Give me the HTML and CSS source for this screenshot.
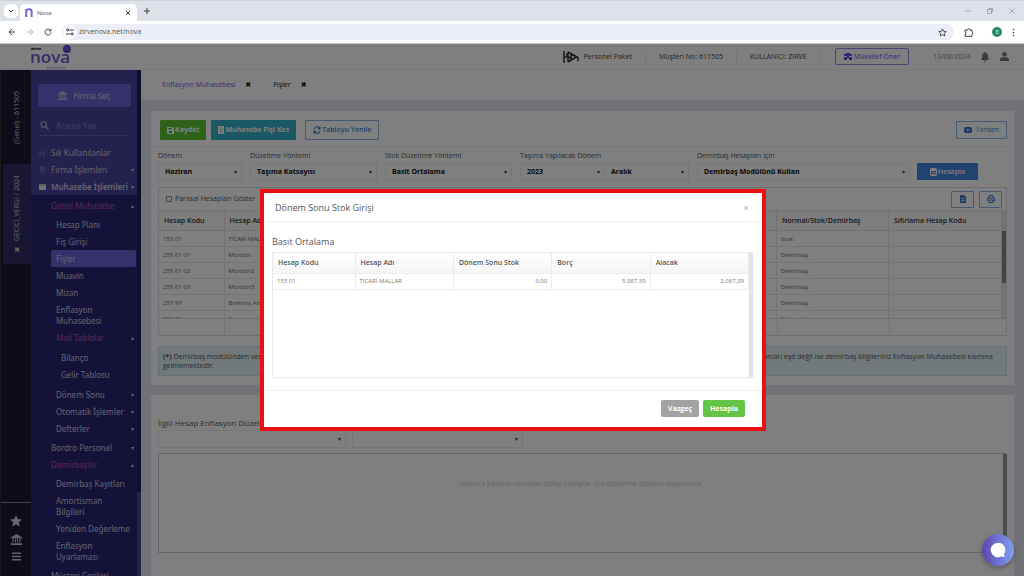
FILE: index.html
```html
<!DOCTYPE html>
<html lang="tr">
<head>
<meta charset="utf-8">
<title>Nova</title>
<link rel="stylesheet" href="styles.css">
</head>
<body>
<header class="browser">
  <div class="tabstrip">
    <button class="tab-search" aria-label="Sekmelerde ara"><svg width="8" height="8" viewBox="0 0 8 8"><path d="M2 3l2 2 2-2" class="ln"/></svg></button>
    <div class="tab">
      <svg width="8" height="9" viewBox="0 0 8 9"><path d="M1.2 9V1M1.2 2.4C3 .6 6.6.8 6.6 3.6V9" fill="none" stroke="#7067cf" stroke-width="2"/></svg>
      <span class="tab-title">Nova</span>
      <button class="plain" aria-label="Sekmeyi kapat"><svg width="6" height="6" viewBox="0 0 6 6"><path d="M1 1l4 4M5 1L1 5" class="ln"/></svg></button>
    </div>
    <button class="plain" aria-label="Yeni sekme"><svg width="8" height="8" viewBox="0 0 8 8"><path d="M4 1v6M1 4h6" class="ln"/></svg></button>
    <div class="window-buttons">
      <svg width="6" height="6" viewBox="0 0 6 6"><path d="M0 3h6"/></svg>
      <svg width="6" height="6" viewBox="0 0 6 6"><rect x=".5" y="1.5" width="4" height="4"/><path d="M2 1.5V.5h3.5V4H4.5"/></svg>
      <svg width="6" height="6" viewBox="0 0 6 6"><path d="M.5.5l5 5M5.5.5l-5 5"/></svg>
    </div>
  </div>
  <div class="addressbar">
    <button class="plain" aria-label="Geri"><svg width="8" height="8" viewBox="0 0 8 8"><path d="M7 4H1.4M4 1L1 4l3 3" class="ln"/></svg></button>
    <button class="plain faint" aria-label="İleri"><svg width="8" height="8" viewBox="0 0 8 8"><path d="M1 4h5.6M4 1l3 3-3 3" class="ln"/></svg></button>
    <button class="plain" aria-label="Yenile"><svg width="8" height="8" viewBox="0 0 8 8"><path d="M6.6 2.6A3 3 0 1 0 7 4.4M7 .8v2.1H4.8" class="ln"/></svg></button>
    <div class="url">
      <span class="site"><svg width="8" height="8" viewBox="0 0 8 8"><path d="M3.5 2H8M0 6h4.5" class="ln"/><circle cx="1.7" cy="2" r="1.1" class="ln"/><circle cx="6.2" cy="6" r="1.1" class="ln"/></svg></span>
      <input type="text" aria-label="Adres" value="zirvenova.net/nova">
      <svg width="9" height="9" viewBox="0 0 10 10"><path d="M5 1l1.2 2.7 3 .3-2.300 2 .7 2.900L5 7.400 2.400 8.900l.7-2.900L.8 4l3-.3z" class="ln"/></svg>
    </div>
    <svg width="10" height="10" viewBox="0 0 10 10"><path d="M1 3h2.500a1.200 1.200 0 0 1 2.400 0H8v2.200a1.200 1.200 0 0 1 0 2.300V9.300H1V7.200a1.100 1.100 0 0 0 0-2.200z" class="ln"/></svg>
    <span class="profile">B</span>
    <svg class="dots" width="3" height="9" viewBox="0 0 3 9"><circle cx="1.500" cy="1.500" r=".8"/><circle cx="1.500" cy="4.500" r=".8"/><circle cx="1.500" cy="7.500" r=".8"/></svg>
  </div>
</header>

<div class="app">
  <header class="topbar">
    <a class="logo" href="#" aria-label="zirve nova">
      <small class="logo-top">zirve</small>
      <b>nova</b>
      <span class="logo-badge">5.0</span>
      <small class="logo-sub">Enterprise</small>
    </a>
    <div class="top-item packet">
      <svg width="16" height="12" viewBox="0 0 16 12"><path d="M1 0v12M1 6h4M5 1v10M5 1l10 5.500M5 11l8-5M3 3l6 6M8 3v6M15 6v4" fill="none" stroke="#333" stroke-width="1.500"/></svg>
      Personel Paket
    </div>
    <div class="top-item number">Müşteri No: 611505</div>
    <div class="top-item user">KULLANICI: ZIRVE</div>
    <button class="invite"><svg width="8" height="7" viewBox="0 0 8 7"><path d="M0 3V1h2V0h4v1h2v2H0zM0 4h3v3H0zM5 4h3v3H5zM3 3h2v2H3z" fill="#5a4fe0"/></svg>Mükellef Öner</button>
    <div class="top-date">13/08/2024</div>
    <svg width="8" height="10" viewBox="0 0 8 10"><path d="M3.300 0h1.400v1C6.500 1.500 7 3 7 5c0 1.500.500 2 1 3H0c.5-1 1-1.500 1-3 0-2 .5-3.500 2.300-4zM2.800 8.600h2.400a1.200 1.200 0 0 1-2.400 0z" fill="#777"/></svg>
    <svg width="9" height="9" viewBox="0 0 9 9"><circle cx="4.500" cy="2.200" r="2.200" fill="#777"/><path d="M0 9V7.500C0 5.500 2 5.300 3 5.200h3c1 .1 3 .3 3 2.300V9z" fill="#777"/></svg>
  </header>

  <div class="workspace">
    <aside class="rail">
      <button class="rail-tab">(Genel) - 611505</button>
      <button class="rail-tab current">✖&nbsp; GECİCİ_VERGİ / 2024</button>
      <div class="rail-tools">
        <button class="plain" aria-label="Favoriler"><svg width="12" height="12" viewBox="0 0 12 12"><path d="M6 0l1.800 3.900 4.200.5-3.100 2.900.8 4.300L6 9.500l-3.700 2.100.8-4.300L0 4.400l4.200-.5z" fill="#c9c8cf"/></svg></button>
        <button class="plain" aria-label="Firmalar"><svg width="11" height="11" viewBox="0 0 11 11"><path d="M0 3.500L5.500 0 11 3.500v1H0zM1.500 5h1.200v3.500H1.500zM4 5h1v3.500H4zM6 5h1v3.500H6zM8.300 5h1.200v3.500H8.300zM0 9.300h11V11H0z" fill="#c9c8cf"/></svg></button>
        <button class="plain" aria-label="Menü"><svg width="9" height="9" viewBox="0 0 9 9"><path d="M0 1.200h9M0 4.500h9M0 7.800h9" stroke="#c9c8cf" stroke-width="1.400"/></svg></button>
      </div>
    </aside>

    <nav class="sidebar">
      <button class="pick"><svg width="9" height="9" viewBox="0 0 11 11"><path d="M0 3.500L5.500 0 11 3.500v1H0zM1.500 5h1.500v3.500H1.500zM4.700 5h1.600v3.500H4.700zM8 5h1.500v3.500H8zM0 9.300h11V11H0z" fill="#b9b5d5"/></svg>Firma Seç</button>
      <label class="search"><svg width="9" height="9" viewBox="0 0 9 9"><circle cx="3.600" cy="3.600" r="2.700" fill="none" stroke="#a5a0c8" stroke-width="1.400"/><path d="M5.600 5.600L8.500 8.500" stroke="#a5a0c8" stroke-width="1.500"/></svg><input type="search" placeholder="Arama Yap" aria-label="Arama Yap"></label>
      <ul class="menu">
        <li><a href="#"><i class="mi dim"><svg width="7" height="7" viewBox="0 0 7 7"><path d="M0 7V4l2-2 2 2V1l2 2v4H4V5H2v2z"/></svg></i>Sık Kullanılanlar</a></li>
        <li><a href="#" class="has"><i class="mi dim"><svg width="7" height="7" viewBox="0 0 7 7"><path d="M1 0h5v7H4V5H3v2H1z"/></svg></i>Firma İşlemleri</a></li>
        <li class="open"><a href="#" class="has bold"><i class="mi"><svg width="7" height="7" viewBox="0 0 7 7"><path d="M0 1h7v6H0z"/><path d="M0 2h7" stroke="#45415f" stroke-width=".5"/></svg></i>Muhasebe İşlemleri</a></li>
      </ul>
      <ul class="menu sub">
        <li><a href="#" class="has up hot">Genel Muhasebe</a>
          <ul>
            <li><a href="#">Hesap Planı</a></li>
            <li><a href="#">Fiş Girişi</a></li>
            <li><a href="#" class="active">Fişler</a></li>
            <li><a href="#">Muavin</a></li>
            <li><a href="#">Mizan</a></li>
            <li><a href="#">Enflasyon<br>Muhasebesi</a></li>
            <li><a href="#" class="has up hot">Mali Tablolar</a>
              <ul>
                <li><a href="#">Bilanço</a></li>
                <li><a href="#">Gelir Tablosu</a></li>
              </ul>
            </li>
            <li><a href="#" class="has">Dönem Sonu</a></li>
            <li><a href="#" class="has">Otomatik İşlemler</a></li>
            <li><a href="#" class="has">Defterler</a></li>
          </ul>
        </li>
        <li><a href="#" class="has">Bordro Personel</a></li>
        <li><a href="#" class="has up hot">Demirbaşlar</a>
          <ul>
            <li><a href="#">Demirbaş Kayıtları</a></li>
            <li><a href="#">Amortisman<br>Bilgileri</a></li>
            <li><a href="#">Yeniden Değerleme</a></li>
            <li><a href="#">Enflasyon<br>Uyarlaması</a></li>
          </ul>
        </li>
        <li><a href="#">Müşteri Çerileri</a></li>
      </ul>
    </nav>
    <div class="side-scroll"><span></span></div>

    <main class="main">
      <div class="pagetabs">
        <a href="#" class="on">Enflasyon Muhasebesi</a><button class="plain x" aria-label="Kapat">✖</button>
        <a href="#" class="second">Fişler</a><button class="plain x" aria-label="Kapat">✖</button>
      </div>
      <div class="cards">
        <section class="card">
          <div class="actions">
            <button class="btn green"><svg width="7" height="7" viewBox="0 0 7 7"><path d="M0 0h5.500L7 1.500V7H0z" fill="#fff"/><path d="M1.500 1h3v1.500h-3zM2 4h3v2H2z" fill="#4fa62e"/></svg>Kaydet</button>
            <button class="btn teal"><svg width="6" height="8" viewBox="0 0 6 8"><path d="M0 0h6v8H0z" fill="#fff"/><path d="M1.500 2h3M1.500 4h3M1.500 6h3" stroke="#2f9fb0" stroke-width=".6"/></svg>Muhasebe Fişi Kes</button>
            <button class="btn outline refresh"><svg width="8" height="8" viewBox="0 0 8 8"><path d="M1 3.500A3 3 0 0 1 6.500 2M7 4.500A3 3 0 0 1 1.500 6M7 .5v2.200H4.800M1 7.500V5.300h2.200" fill="none" stroke="#3f7ac8" stroke-width="1.200"/></svg>Tabloyu Yenile</button>
            <button class="btn outline help"><svg width="8" height="6" viewBox="0 0 8 6"><rect width="8" height="6" rx="1.500" fill="#3f7ac8"/><path d="M3.200 1.700v2.600L5.400 3z" fill="#fff"/></svg>Yarden</button>
          </div>
          <form class="filters">
            <div class="field f1"><label for="donem">Dönem</label><div class="pick-box"><select id="donem"><option>Haziran</option></select></div></div>
            <div class="field f2"><label for="yontem">Düzeltme Yöntemi</label><div class="pick-box"><select id="yontem"><option>Taşıma Katsayısı</option></select></div></div>
            <div class="field f3"><label for="stok">Stok Düzeltme Yöntemi</label><div class="pick-box"><select id="stok"><option>Basit Ortalama</option></select></div></div>
            <div class="field f4"><label for="yil">Taşıma Yapılacak Dönem</label><div class="pair"><div class="pick-box"><select id="yil"><option>2023</option></select></div><div class="pick-box"><select aria-label="Ay"><option>Aralık</option></select></div></div></div>
            <div class="field f5"><label for="demirbas">Demirbaş Hesapları İçin</label><div class="pick-box"><select id="demirbas"><option>Demirbaş Modülünü Kullan</option></select></div></div>
            <button type="button" class="btn blue"><svg width="7" height="8" viewBox="0 0 7 8"><rect x=".5" y=".5" width="6" height="7" rx=".6" fill="none" stroke="#fff"/><path d="M1 1h5v2H1zM1.500 4h1v1h-1zM3 4h1v1H3zM4.500 4h1v3h-1zM1.500 6h2.500v1H1.500z" fill="#fff"/></svg>Hesapla</button>
          </form>
          <div class="grid-box">
            <div class="grid-tools">
              <label><input type="checkbox">Parasal Hesapları Göster</label>
              <button class="btn outline icon first" aria-label="Dışa aktar"><svg width="6" height="8" viewBox="0 0 6 8"><path d="M0 0h4l2 2v6H0z" fill="#3f7ac8"/><path d="M1.500 3.500h3M1.500 5.500h3" stroke="#fff" stroke-width=".8"/></svg></button>
              <button class="btn outline icon" aria-label="Yazdır"><svg width="8" height="8" viewBox="0 0 8 8"><path d="M2 3V.5h4V3M.5 6V3h7v3H6M2 5h4v2.500H2z" fill="none" stroke="#3f7ac8"/></svg></button>
            </div>
            <div class="grid-main">
              <div class="grid-view">
                <table class="data">
                  <colgroup><col class="c1"><col><col class="c3"><col class="c4"></colgroup>
                  <thead><tr><th>Hesap Kodu</th><th>Hesap Adı</th><th>Normal/Stok/Demirbaş</th><th>Sıfırlama Hesap Kodu</th></tr></thead>
                  <tbody>
                    <tr><td>153 01</td><td>TİCARİ MALLAR</td><td>Stok</td><td></td></tr>
                    <tr><td>255 01 01</td><td>Monitör</td><td>Demirbaş</td><td></td></tr>
                    <tr><td>255 01 02</td><td>Monitör2</td><td>Demirbaş</td><td></td></tr>
                    <tr><td>255 01 03</td><td>Monitör3</td><td>Demirbaş</td><td></td></tr>
                    <tr><td>257 99</td><td>Birikmiş Amortismanlar</td><td>Demirbaş</td><td></td></tr>
                    <tr><td>500 01</td><td>Sermaye</td><td>Normal</td><td></td></tr>
                  </tbody>
                </table>
              </div>
              <div class="track"><span></span></div>
            </div>
            <div class="grid-foot"><span></span><span></span><span></span><span></span></div>
          </div>
          <p class="note"><b>(*)</b> Demirbaş modülünden verilerin gelebilmesi için demirbaş kartlarındaki toplam tutarlar ile muhasebe hesaplarının dönem sonu bakiyeleri eşit olmalıdır. Hesapların birikmiş amortismanları eşit değil ise demirbaş bilgileriniz Enflasyon Muhasebesi kısmına gelmemektedir.</p>
        </section>

        <section class="card lower">
          <h2>İlgili Hesap Enflasyon Düzeltme Tablosu</h2>
          <div class="lower-row">
            <div class="pick-box"><select aria-label="Hesap"><option></option></select></div>
            <div class="pick-box"><select aria-label="Tablo"><option></option></select></div>
          </div>
          <div class="empty"><p>Yalnızca parasal olmayan detay hesaplar için düzeltme tablosu oluşturulur.</p><i></i></div>
        </section>
      </div>
    </main>
  </div>

  <div class="overlay">
    <div class="dialog" role="dialog" aria-labelledby="dlg-title">
      <div class="dlg-head"><h1 id="dlg-title">Dönem Sonu Stok Girişi</h1><button class="plain" aria-label="Kapat"><svg width="6" height="6" viewBox="0 0 6 6"><path d="M1 1l4 4M5 1L1 5" stroke="#b5b5b5"/></svg></button></div>
      <div class="dlg-body">
        <h3>Basit Ortalama</h3>
        <div class="dlg-grid">
          <table class="stock">
            <colgroup><col class="s1"><col><col><col><col></colgroup>
            <thead><tr><th>Hesap Kodu</th><th>Hesap Adı</th><th>Dönem Sonu Stok</th><th>Borç</th><th>Alacak</th></tr></thead>
            <tbody><tr><td>153 01</td><td>TİCARİ MALLAR</td><td class="num">0,00</td><td class="num">5.087,39</td><td class="num">2.087,39</td></tr></tbody>
          </table>
          <span class="dlg-track"></span>
        </div>
      </div>
      <div class="dlg-foot"><button class="btn grey">Vazgeç</button><button class="btn lime">Hesapla</button></div>
    </div>
  </div>

  <button class="chat" aria-label="Sohbet"><svg width="16" height="16" viewBox="0 0 16 16"><path d="M8 .8a7.200 7.200 0 1 0 3.600 13.400c1 .8 2.400 1 3.400.8-.6-.7-.9-1.600-.9-3A7.200 7.200 0 0 0 8 .8z" fill="#fff"/></svg></button>
</div>
</body>
</html>
```
FILE: styles.css
```css
* { box-sizing: border-box; }

body {
  margin: 0;
  height: 100vh;
  display: flex;
  flex-direction: column;
  overflow: hidden;
  font: 7px/10px "Open Sans", "Noto Sans", sans-serif;
  color: #555;
  background: #fff;
}

button, input, select { font: inherit; color: inherit; }
button { cursor: pointer; }
a { color: inherit; text-decoration: none; }
ul { list-style: none; margin: 0; padding: 0; }
h1, h2, h3, p { margin: 0; font-weight: 400; }
svg { display: block; flex: none; }

.ln { fill: none; stroke: #3c4043; stroke-width: 1; }
.plain { border: 0; background: none; padding: 0; display: flex; align-items: center; }
.faint { opacity: .4; }

/* Browser frame */
.browser { flex: none; background: #dde2e8; border-top: 1px solid #cdd2d8; }
.tabstrip { height: 20px; display: flex; align-items: center; gap: 2px; padding: 0 9px 0 4px; }
.tab-search { width: 14px; height: 14px; border: 0; border-radius: 5px; background: #fff; padding: 3px; }
.tab {
  align-self: flex-end;
  width: 117px;
  height: 17px;
  margin-right: 4px;
  padding: 0 6px 0 5px;
  display: flex;
  align-items: center;
  gap: 4px;
  background: #fff;
  border-radius: 5px 5px 0 0;
}
.tab-title { flex: 1; font-size: 6px; color: #555; }
.window-buttons { margin-left: auto; display: flex; gap: 16px; }
.window-buttons path, .window-buttons rect { fill: none; stroke: #8b9095; stroke-width: .7; }
.addressbar { height: 23px; background: #fff; display: flex; align-items: center; gap: 10px; padding: 0 9px 0 8px; border-bottom: 1px solid #c6c6c6; }
.url { flex: 1; height: 16px; display: flex; align-items: center; gap: 3px; padding: 0 7px 0 1px; border-radius: 8px; background: #ebeef6; }
.site { width: 13px; height: 13px; display: grid; place-items: center; border-radius: 7px; background: #fff; }
.url input { flex: 1; border: 0; background: none; padding: 0; color: #555; outline: 0; }
.profile { width: 10px; height: 10px; margin-left: 8px; border-radius: 50%; background: #1f8a70; color: #d5ebe5; font-size: 5px; text-align: center; }
.dots { fill: #3c4043; }

/* Application frame */
.app { position: relative; flex: 1; min-height: 0; display: flex; flex-direction: column; background: #fff; }
.topbar { flex: none; height: 26px; display: flex; align-items: center; padding: 0 15px 0 30px; border-bottom: 1px solid #f0f0f0; color: #444; }
.logo { position: relative; width: 45px; height: 24px; margin-right: auto; color: #6a5fd0; }
.logo b { display: block; padding-top: 3px; font: 600 17px/18px "Open Sans", sans-serif; }
.logo small { position: absolute; font-size: 4px; line-height: 5px; }
.logo-top { left: 1px; top: 1px; color: #111; font-weight: 800; }
.logo-sub { right: 9px; bottom: -1px; }
.logo-badge { position: absolute; right: 4px; top: 0; width: 8px; height: 8px; border-radius: 50%; background: #5548c8; color: #a9a2e8; font-size: 4px; line-height: 8px; text-align: center; }
.top-item { height: 14px; display: flex; align-items: center; border-right: 1px solid #ececec; }
.packet { gap: 4px; padding-right: 13px; }
.number { padding: 0 13px; }
.user { padding: 0 13px; }
.invite { height: 17px; margin: 0 24px 0 14px; padding: 0 8px; display: flex; align-items: center; gap: 2px; border: 1px solid #8f88ec; border-radius: 2px; background: none; color: #5a4fe0; }
.top-date { width: 38px; margin-right: 10px; color: #888; }
.topbar > svg + svg { margin-left: 11px; }

.workspace { flex: 1; min-height: 0; display: flex; }

/* Firm rail */
.rail { flex: none; width: 31px; display: flex; flex-direction: column; background: #1c1833; border-left: 1px solid #333; color: #ccc; }
.rail-tab { height: 94px; margin-left: 2px; padding: 0; border: 0; background: none; writing-mode: vertical-rl; transform: rotate(180deg); text-align: center; line-height: 28px; }
.rail-tab.current { height: 100px; background: #332d68; }
.rail-tools { margin-top: auto; padding: 12px 0 15px; display: flex; flex-direction: column; align-items: center; gap: 7px; border-top: 1px solid #8a8893; }

/* Side menu */
.sidebar { flex: none; width: 106px; overflow: hidden; background: #4a439f; color: #c9c6dc; font: 400 8px/11px "Noto Sans", "Open Sans", sans-serif; }
.pick { display: flex; align-items: center; justify-content: center; gap: 6px; width: 93px; height: 23px; margin: 14px 0 0 7px; padding: 0; border: 0; border-radius: 2px; background: #6e63d6; color: #b9b5d5; font-weight: 600; }
.search { display: flex; align-items: center; gap: 7px; height: 20px; margin: 9px 8px 8px; padding: 0 1px; border-bottom: 1px solid #6a64ad; }
.search input { flex: 1; min-width: 0; border: 0; padding: 0; background: none; outline: 0; }
.search input::placeholder { color: #817cb5; }
.menu a { display: flex; align-items: center; padding: 3px 0; }
.menu > li > a { padding-left: 20px; }
.mi { width: 7px; margin-left: -12px; margin-right: 5px; fill: #e4e3ea; }
.mi.dim { fill: #6a64a5; }
.bold { font-weight: 600; }
.has::after { content: "▾"; margin-left: auto; padding-right: 3px; font: 6px/6px "DejaVu Sans", sans-serif; }
.has.up::after { content: "▴"; }
.sub { padding: 2px 0; background: #2a2575; }
.sub ul { padding: 2px 0; }
.sub ul ul { padding: 3px 0; }
.sub ul a { padding-left: 25px; }
.sub ul ul a { padding-left: 30px; }
.hot { color: #b04fb5; }
.hot::after { color: #c9c6dc; }
.sub .active { margin: 0 1px 0 20px; padding-left: 5px; border-radius: 2px; background: #6e63d6; }
.side-scroll { flex: none; width: 4px; display: flex; align-items: flex-end; background: #211d55; }
.side-scroll span { width: 4px; height: 84px; background: #4a4488; }

/* Page */
.main { flex: 1; min-width: 0; display: flex; flex-direction: column; background: #e3e4ee; }
.pagetabs { flex: none; height: 30px; padding: 0 21px; display: flex; align-items: center; background: #fff; font-family: "Noto Sans", "Open Sans", sans-serif; }
.pagetabs .on { color: #7a6ee8; }
.pagetabs .second { margin-left: 22px; color: #222; }
.x { margin-left: 10px; font: 7px/7px "DejaVu Sans", sans-serif; color: #111; }
.cards { flex: 1; min-height: 0; display: flex; flex-direction: column; gap: 10px; padding: 11px 10px 0; }
.card { background: #fff; padding: 9px 7px; }
.actions { display: flex; gap: 5px; height: 27px; margin: 0 -7px; padding: 0 7px 0 9px; border-bottom: 1px solid #f0f0f0; }
.btn { display: flex; align-items: center; justify-content: center; gap: 1px; height: 20px; padding: 0 7px; border: 0; border-radius: 1px; color: #fff; font-weight: 700; }
.btn.green { background: #5cc531; }
.btn.teal { background: #35b3c6; }
.btn.outline { border: 1px solid #8fb3e3; background: #fff; color: #4a7fc8; font-weight: 600; }
.btn.refresh { margin-left: 4px; }
.btn.help { margin: 1px 0 0 auto; height: 18px; gap: 4px; font-weight: 400; }
.btn.blue { width: 61px; height: 17px; margin: 14px 29px 0 -1px; background: #4286e0; font-weight: 600; }

.filters { display: flex; align-items: flex-start; gap: 8px; padding-top: 2px; }
.field label { display: block; height: 14px; line-height: 14px; }
.f1 { width: 84px; }
.f2, .f3 { width: 127px; }
.f4 { width: 169px; }
.f5 { flex: 1; }
.pair { display: flex; }
.pair .pick-box { flex: 1; }
.pair .pick-box + .pick-box { border-left: 0; }
.pick-box { display: flex; align-items: center; height: 18px; padding: 0 4px 0 6px; border: 1px solid #ececec; background: #fff; }
.pick-box::after { content: "▾"; font: 6px/6px "DejaVu Sans", sans-serif; color: #444; }
.pick-box select { flex: 1; min-width: 0; appearance: none; border: 0; padding: 0; background: none; outline: 0; color: #111; font-weight: 700; }

.grid-box { margin-top: 6px; border: 1px solid #dcdcdc; }
.grid-tools { height: 22px; display: flex; align-items: center; padding-right: 4px; color: #555; }
.grid-tools label { display: flex; align-items: center; gap: 3px; margin-left: 7px; margin-right: auto; }
.grid-tools input { appearance: none; width: 6px; height: 6px; margin: 0; border: 1px solid #888; border-radius: 1px; background: #fff; }
.icon { width: 23px; height: 17px; padding: 0; }
.icon.first { margin-right: 5px; }
.grid-main { display: flex; height: 108px; }
.grid-view { flex: 1; overflow: hidden; }
.track { width: 4px; padding-top: 21px; background: #e6e6e6; }
.track span { display: block; height: 52px; background: #888; }
table { width: 100%; border-collapse: collapse; table-layout: fixed; }
th, td { border: 1px solid #e6e6e6; text-align: left; white-space: nowrap; overflow: hidden; font-weight: 400; }
.data tr > :first-child, .data tr > :last-child { border-left: 0; }
.data .c1 { width: 65px; }
.data .c3 { width: 112px; }
.data .c4 { width: 113px; }
.data th { height: 20px; padding: 0 5px; color: #333; font-weight: 600; background: #fafafa; }
.data td { height: 16px; padding: 0 4px; color: #666; font-size: 6px; }
.grid-foot { height: 17px; display: grid; grid-template-columns: 65px 1fr 112px 117px; border-top: 1px solid #dcdcdc; }
.grid-foot span + span { border-left: 1px solid #e6e6e6; }
.note { margin-top: 10px; padding: 5px 4px; border: 1px solid #c5dfe8; background: #e5f2f6; line-height: 9px; }

.lower { flex: 1; padding-top: 22px; display: flex; flex-direction: column; }
.lower h2 { font-size: 8px; line-height: 12px; }
.lower-row { display: flex; gap: 6px; margin-top: 1px; }
.lower-row .pick-box { width: 188px; }
.lower-row .pick-box + .pick-box { width: 171px; }
.empty { height: 100px; margin-top: 5px; display: flex; border: 1px solid #ccc; border-right: 0; color: #ccc; text-align: center; font-family: "Noto Sans", "Open Sans", sans-serif; }
.empty p { flex: 1; padding-top: 25px; }
.empty i { width: 4px; height: 84px; background: #999; }

/* Dialog */
.overlay { position: absolute; inset: 0; display: flex; justify-content: center; align-items: flex-start; padding: 145px 0 0 2px; background: rgba(0, 0, 0, .5); }
.dialog { width: 506px; max-width: 100%; border: 4px solid #e81010; background: #fff; }
.dlg-head { height: 29px; display: flex; align-items: center; justify-content: space-between; padding: 2px 13px 0 11px; border-bottom: 1px solid #f0f0f0; }
.dlg-head h1 { font-size: 9px; line-height: 12px; }
.dlg-body { padding: 13px 9px 12px 8px; border-bottom: 1px solid #f0f0f0; }
.dlg-body h3 { font-size: 9px; line-height: 14px; }
.dlg-grid { display: flex; height: 126px; margin-top: 3px; border: 1px solid #e8e8e8; border-right: 0; }
.stock { align-self: flex-start; flex: 1; }
.stock th, .stock td { border: 0; border-bottom: 1px solid #ececec; border-right: 1px solid #ececec; }
.stock .s1 { width: 82px; }
.stock th { height: 20px; padding: 0 5px; font-weight: 600; background: linear-gradient(#fff, #f5f5f5); }
.stock td { height: 16px; padding: 0 4px; font-size: 6px; color: #777; }
.stock .num { text-align: right; }
.dlg-track { width: 4px; background: #e2e2e2; }
.dlg-foot { display: flex; justify-content: flex-end; gap: 4px; padding: 9px 17px 10px; }
.dlg-foot .btn { height: 17px; border-radius: 2px; }
.grey { background: #a3a3a3; }
.lime { background: #63c445; }

.chat { position: absolute; right: 10px; bottom: 10px; width: 32px; height: 32px; display: grid; place-items: center; padding: 0; border: 0; border-radius: 50%; background: linear-gradient(to right, #5b46ae, #7f9ff2); box-shadow: 0 2px 5px rgba(0, 0, 0, .3); }
```
